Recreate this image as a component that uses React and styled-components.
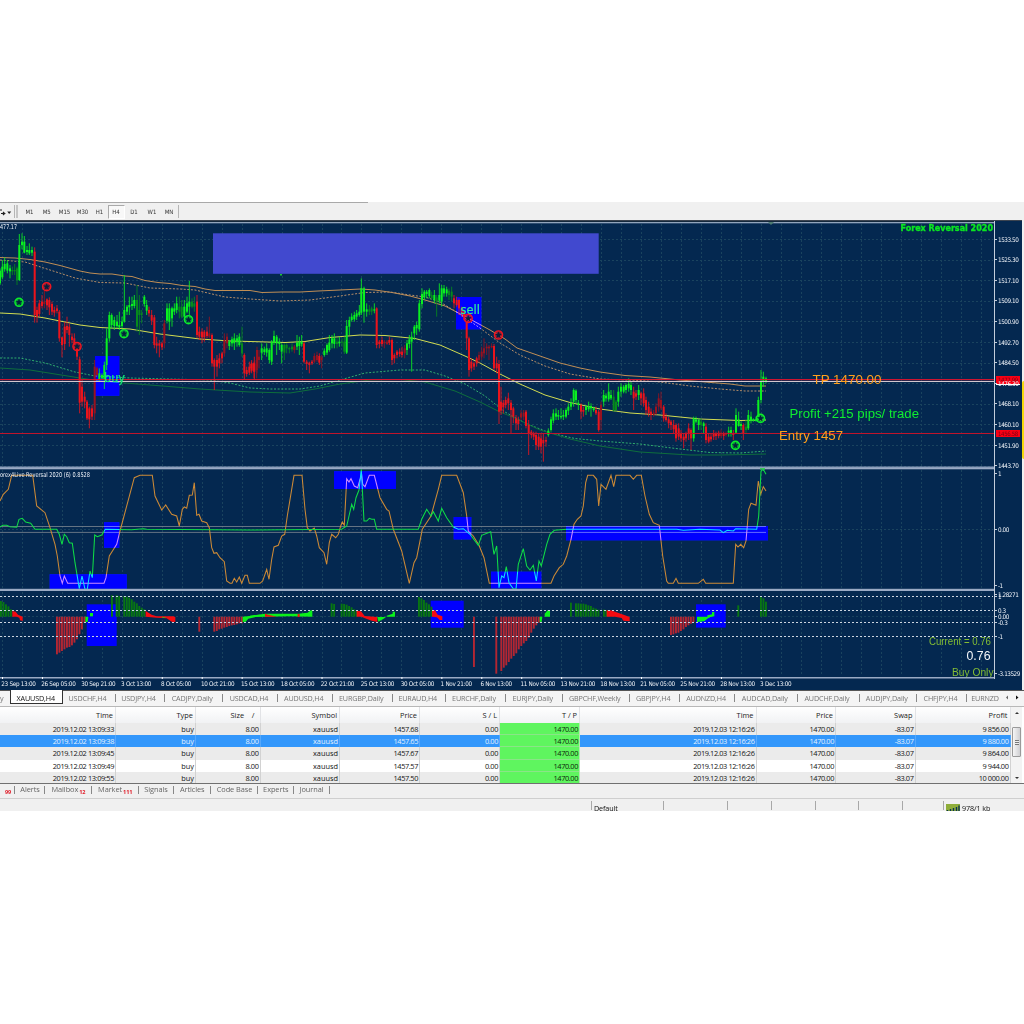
import React from "react";
import styled, { createGlobalStyle, css } from "styled-components";

const GlobalStyle = createGlobalStyle`
  html, body { margin: 0; background: #fff; }
  body { width: 1024px; height: 1024px; overflow: hidden; }
`;

const ui = css`font-family: "Open Sans", "Noto Sans", sans-serif;`;
const scaleFont = css`font-family: "DejaVu Sans Condensed", "DejaVu Sans", sans-serif; font-stretch: condensed;`;

const Screen = styled.div`
  ${ui}
  width: 1024px;
  height: 1024px;
  padding-top: 202px;
  box-sizing: border-box;
  background: #fff;
`;

const Terminal = styled.div`
  display: flex;
  flex-direction: column;
  width: 1024px;
  height: 609px;
  background: #f0f0f0;
  position: relative;
  overflow: hidden;
`;

/* ---------- toolbar ---------- */
const Toolbar = styled.div`
  display: flex;
  align-items: center;
  height: 18px;
  flex: none;
  background: linear-gradient(90deg, #a9a9a9, #a9a9a9) 0 0 / 368px 1px no-repeat, #f0f0f0;
`;
const Tool = styled.svg`
  display: block;
  width: 14px;
  height: 18px;
`;
const Grip = styled.div`
  width: ${(p) => p.$w || 1}px;
  height: 13px;
  margin: 1px 1px 0 0;
  background: ${(p) => p.$c || "#b5b5b5"};
`;
const Period = styled.div`
  box-sizing: border-box;
  width: ${(p) => p.$w}px;
  height: 14px;
  margin-top: 2px;
  text-align: center;
  font-size: 6px;
  line-height: 13.5px;
  ${scaleFont}
  color: #333;
  ${(p) => p.$on && css`
    background: #f8f8f8;
    border: 1px solid #aaa;
    border-right-color: #fff;
    border-bottom-color: #fff;
    line-height: 12px;
  `}
`;

/* ---------- chart window ---------- */
const ChartWindow = styled.div`
  display: flex;
  flex-direction: column;
  flex: none;
  width: 1022px;
  height: 470px;
  box-sizing: border-box;
  border-top: 1px solid #3c4450;
  background: #042850;
`;
const Panel = styled.div`
  display: flex;
  flex: none;
  height: ${(p) => p.$h}px;
`;
const Plot = styled.svg`
  display: block;
  flex: none;
  width: 994px;
  height: ${(p) => p.$h}px;
`;
const PriceScale = styled.div`
  flex: 1;
  box-sizing: border-box;
  height: ${(p) => p.$h}px;
  border-left: 1px solid #c3cddb;
`;
const Mark = styled.div`
  display: flex;
  align-items: center;
  height: 0;
  margin-top: ${(p) => p.$gap}px;
  font-size: 6.3px;
  letter-spacing: -0.44px;
  white-space: nowrap;
  color: #f2f5fa;
  ${scaleFont}
  &::before {
    content: "";
    width: 2px;
    height: 1px;
    margin-right: 1px;
    background: #c3cddb;
  }
`;
const PriceTag = styled.div`
  box-sizing: border-box;
  display: flex;
  align-items: center;
  height: ${(p) => (p.$line ? 9 : 7)}px;
  margin: ${(p) => p.$gap}px 2px ${(p) => -p.$gap - (p.$line ? 9 : 7)}px 1px;
  padding-left: 2px;
  font-size: 6px;
  letter-spacing: -0.36px;
  color: #7a0014;
  background: #fa0014;
  border-bottom: ${(p) => (p.$line ? "1px solid #fff" : "0")};
  ${scaleFont}
`;
const TimeScale = styled.div`
  display: flex;
  flex: none;
  height: 11px;
  padding-left: 1.3px;
  margin-top: -1px;
`;
const TimeMark = styled.div`
  flex: none;
  width: 39.94px;
  font-size: 6.3px;
  line-height: 11px;
  letter-spacing: -0.3px;
  white-space: nowrap;
  color: #f2f5fa;
  ${scaleFont}
`;

/* ---------- chart tabs ---------- */
const Tabs = styled.div`
  display: flex;
  flex: none;
  height: 17px;
  box-sizing: border-box;
  border-top: 1px solid #555;
  border-bottom: 1px solid #b8b8b8;
  background: #f4f4f4;
`;
const Tab = styled.div`
  box-sizing: border-box;
  flex: none;
  width: ${(p) => p.$w}px;
  height: 14px;
  padding-right: 3px;
  font-size: 7.2px;
  letter-spacing: -0.14px;
  line-height: 14px;
  text-align: center;
  white-space: nowrap;
  color: #757575;
  background: linear-gradient(#888, #888) right 3px / 1px 8px no-repeat;
  ${(p) => p.$plain && css`background: none;`}
  ${(p) => p.$on && css`
    margin-top: -1px;
    padding-right: 1px;
    border: 1px solid #333;
    border-top: 0;
    color: #111;
    background: #fff;
    line-height: 16px;
  `}
`;

/* ---------- trade table ---------- */
const Row = styled.div`
  display: grid;
  grid-template-columns: 116px 80px 64.5px 79.5px 80px 80px 80px 176.5px 79.5px 79.5px 95px;
  width: 1010.5px;
  flex: none;
  height: ${(p) => p.$h}px;
  background: ${(p) => p.$bg};
  color: ${(p) => p.$fg};
`;
const Cell = styled.div`
  box-sizing: border-box;
  padding-right: ${(p) => p.$pad}px;
  border-right: 1px solid ${(p) => p.$rule};
  text-align: right;
  font-size: 7.4px;
  letter-spacing: ${(p) => (p.$tight ? -0.4 : 0)}px;
  line-height: ${(p) => p.$lh}px;
  white-space: nowrap;
  background: ${(p) => p.$fill || "none"};
  color: ${(p) => (p.$fill ? "#0c260b" : "inherit")};
  ${(p) => p.$fill && css`box-shadow: inset 0 -1px #8be488;`}
`;
const TableArea = styled.div`
  display: flex;
  flex: none;
  height: 77px;
  box-sizing: border-box;
  background: #fff;
  border-bottom: 1px solid #707070;
`;
const Rows = styled.div`
  width: 1011px;
  height: 76px;
  overflow: hidden;
`;
const ScrollBar = styled.div`
  display: flex;
  flex-direction: column;
  align-items: center;
  width: 11px;
  height: 76px;
  background: #f3f3f3;
`;
const Arrow = styled.div`
  width: 0;
  height: 0;
  border: 2px solid transparent;
  ${(p) => (p.$down ? "border-top-color: #333; margin-top: 20px;" : "border-bottom-color: #333; margin-top: 3px; ")}
`;
const Thumb = styled.div`
  display: flex;
  align-items: center;
  justify-content: center;
  box-sizing: border-box;
  width: 9px;
  height: 30px;
  margin-top: 13px;
  border: 1px solid #9a9a9a;
  border-radius: 1px;
  background: linear-gradient(90deg, #f6f6f6, #cfcfd2);
  &::after {
    content: "";
    width: 4px;
    height: 5px;
    background: repeating-linear-gradient(#777 0 1px, #eee 1px 2px);
  }
`;

/* ---------- bottom tabs and status bar ---------- */
const BottomTabs = styled.div`
  display: flex;
  flex: none;
  box-sizing: border-box;
  height: 15px;
  border-bottom: 1px solid #cfcfcf;
`;
const BottomTab = styled.div`
  flex: none;
  width: ${(p) => p.$w}px;
  height: 14px;
  text-align: center;
  font-size: 7.4px;
  line-height: 11px;
  letter-spacing: -0.08px;
  white-space: nowrap;
  color: #666;
  background: linear-gradient(#888, #888) right 2px / 1px 8px no-repeat;
`;
const Count = styled.span`
  font-weight: 700;
  font-size: 5.6px;
  color: #e0202c;
  position: relative;
  top: 2px;
  margin-left: 1px;
`;
const StatusBar = styled.div`
  display: flex;
  flex: 1;
  padding-left: 591px;
  background: #f0f0f0;
`;
const Status = styled.div`
  box-sizing: border-box;
  display: flex;
  align-items: center;
  gap: 2px;
  width: ${(p) => p.$w}px;
  height: 10px;
  margin-top: 2px;
  padding: 3px 0 0 3px;
  background: linear-gradient(#a8a8a8, #a8a8a8) 0 0 / 1px 9px no-repeat;
  font-size: 7.2px;
  letter-spacing: -0.1px;
  line-height: 8px;
  color: #111;
  white-space: nowrap;
`;
const SideStrip = styled.div`
  position: absolute;
  right: 0;
  top: 179px;
  width: 2.5px;
  height: 78px;
  border-radius: 2px 0 0 2px;
  background: #f4d90c;
`;

/* ---------- price data: x, high, low, body top, body bottom, kind (thirds of a pixel) ---------- */
const BARS_A = `0 205 255 212 250 g|7 180 238 200 232 g|14 172 215 192 208 g|22 180 220 190 212 g|30 195 235 205 214 g|37 200 225 210 214 d|44 192 225 210 214 d|51 200 255 205 240 d|58 102 243 135 240 g|66 100 148 125 135 g|73 108 160 125 158 g|81 138 165 150 156 g|88 130 165 150 160 g|96 140 168 150 158 g|104 142 368 155 345 r|111 320 368 330 350 r|118 300 350 310 342 r|126 285 325 305 318 r|133 270 325 305 312 m|141 295 330 298 316 r|148 292 345 300 322 r|156 305 345 312 335 r|163 320 350 330 338 r|171 315 340 325 333 r|178 330 425 335 415 r|186 410 472 412 435 r|194 365 450 380 432 r|201 350 400 378 390 r|208 370 440 380 405 r|216 400 430 410 420 r|223 400 445 415 430 r|231 430 480 435 470 r|239 470 640 478 608 r|246 540 620 560 605 r|254 575 625 590 605 r|261 600 660 605 655 r|268 620 685 625 658 r|276 615 660 625 650 r|284 480 660 500 640 m|291 500 530 505 525 m|298 505 545 520 538 g|306 520 540 525 535 g|313 485 567 495 540 g|320 385 510 415 495 g|328 335 425 345 415 g|335 340 385 345 375 g|343 350 390 360 378 g|351 345 385 365 378 g|358 335 390 375 382 g|366 350 385 365 378 g|373 225 368 330 365 g|381 315 345 320 335 g|388 290 345 315 322 g|396 290 330 312 318 g|403 285 325 300 318 g|411 255 395 300 380 d|418 285 405 330 345 d|425 330 370 340 345 d|433 285 320 290 312 g|440 300 345 315 332 g|447 320 350 330 340 r|455 330 375 345 362 r|463 345 445 352 435 r|470 410 460 430 437 r|478 420 472 430 437 r|486 425 450 430 442 r|493 360 445 370 430 m|501 310 370 325 362 g|508 310 390 325 365 g|516 320 380 325 355 g|523 310 345 325 335 g|530 290 340 310 330 g|538 290 355 320 335 d|545 300 355 320 350 d|553 300 360 320 350 g|561 290 340 310 335 g|568 243 345 305 320 g|576 295 325 305 320 d|583 290 335 310 320 d|591 285 415 305 405 r|598 380 420 395 410 r|606 385 430 395 412 r|613 390 425 395 412 r|621 380 415 395 408 r|628 350 415 400 410 m|636 400 500 405 490 r|643 475 570 480 500 r|651 465 530 480 500 r|658 460 505 475 490 r|666 455 490 460 475 r|673 400 470 420 460 m|681 400 445 410 430 m|688 420 450 425 438 g|696 410 440 418 430 g|703 400 450 415 430 g|711 405 440 415 425 g|718 400 440 410 435 g|726 380 470 430 460 d|733 460 540 465 520 r|740 500 530 510 522 r|748 485 525 500 518 r|755 480 520 490 512 r|763 470 540 490 515 r|771 440 520 450 500 m`;
const BARS_B = `4 425 455 432 445 r|12 425 475 430 455 r|20 400 475 420 450 m|27 390 445 410 420 m|35 370 420 385 398 g|43 380 405 388 396 g|50 370 410 385 398 g|58 385 430 390 420 g|65 360 435 365 425 g|72 332 375 348 368 g|80 345 405 350 370 g|88 355 390 365 372 g|95 370 430 375 395 g|103 370 420 375 398 d|110 370 400 375 385 d|118 380 400 384 388 d|126 370 395 380 388 d|133 375 400 380 390 m|141 345 390 368 380 g|148 350 405 365 378 g|155 345 380 365 372 g|162 365 430 370 425 r|170 420 450 425 432 r|178 425 460 428 435 r|186 420 435 425 430 r|193 400 430 408 425 m|201 395 425 405 420 m|208 400 435 408 428 r|215 405 445 412 420 m|223 385 410 392 405 g|231 370 405 375 398 g|238 345 395 368 390 g|246 345 385 355 370 g|253 340 385 355 372 g|261 355 385 365 372 d|268 350 380 365 370 g|276 355 380 365 368 d|283 350 402 365 395 d|290 300 402 318 398 g|298 290 345 300 320 g|305 280 305 290 300 g|313 275 305 285 298 g|320 270 300 280 290 g|328 255 290 275 285 g|334 175 285 205 278 g|342 200 308 205 275 g|350 250 290 268 275 g|358 255 285 268 275 d|365 260 285 265 275 d|373 250 280 268 272 g|380 262 385 265 375 r|388 360 385 365 372 r|396 350 380 360 372 r|403 360 385 365 370 m|411 360 375 365 372 m|418 350 375 360 368 r|426 355 435 360 420 r|433 400 430 405 415 r|441 390 415 395 405 r|449 385 410 395 402 r|456 380 412 395 405 r|464 375 415 385 400 m|471 360 405 370 390 g|478 345 385 358 372 g|485 335 455 350 365 g|493 315 360 320 340 g|500 305 345 315 325 g|508 240 335 250 328 g|516 205 265 222 252 g|523 210 240 215 232 g|530 210 235 215 222 g|538 205 235 210 228 g|545 215 240 225 235 d|553 210 250 225 240 g|560 225 290 232 245 d|568 190 250 225 242 g|575 195 260 205 245 g|582 195 230 205 220 g|590 200 230 208 220 g|597 205 240 212 225 d|605 200 245 215 230 d|612 225 265 235 250 r|620 230 260 240 255 r|627 235 285 240 265 r|635 260 290 265 280 r|642 270 300 275 290 r|650 290 390 300 355 r|657 350 470 355 450 r|664 415 455 425 445 r|672 425 450 430 440 r|680 410 440 415 430 r|687 395 430 405 420 m|695 380 420 395 410 m|702 355 415 385 400 m|710 370 405 380 385 m|717 375 420 380 385 m|725 370 385 378 382 m|732 372 450 378 445 r|740 410 460 430 445 r|747 420 612 432 575 r`;
const BARS_C = `3 500 585 545 572 r|10 540 580 548 562 r|17 530 565 540 555 r|25 518 570 535 550 r|33 540 640 548 570 r|40 560 610 565 590 r|48 585 630 595 610 r|55 590 630 600 612 r|63 570 600 580 592 m|71 570 600 578 590 m|78 570 625 575 618 r|86 600 705 615 640 r|94 630 655 635 645 r|101 635 660 640 650 r|108 635 690 645 675 r|116 640 690 650 680 r|123 640 700 655 680 r|130 640 725 660 670 r|138 650 680 660 665 r|145 625 650 632 645 g|153 590 635 598 630 g|160 568 610 580 602 g|168 565 600 580 590 g|175 570 600 585 590 g|183 565 598 588 592 g|190 570 600 585 590 g|198 565 595 570 590 g|205 550 585 560 572 g|213 535 570 548 560 g|221 505 560 510 545 g|228 508 550 512 540 g|235 540 570 548 555 g|243 550 598 555 575 r|250 560 590 570 575 r|258 555 585 560 570 g|266 545 575 558 568 g|273 550 590 558 565 g|281 560 575 565 570 g|288 560 585 570 580 r|296 570 635 575 630 r|303 545 630 555 600 m|311 510 560 525 545 g|318 520 545 527 535 g|326 490 545 515 538 g|333 510 540 525 535 g|341 510 575 530 572 d|348 540 575 545 570 d|355 500 560 515 545 g|363 490 530 500 515 g|371 495 520 500 515 g|378 490 520 495 510 g|386 475 515 492 505 g|393 485 525 495 510 g|401 500 570 515 535 r|408 510 540 520 530 r|416 495 540 510 525 g|423 515 555 520 535 r|431 505 560 520 550 r|438 530 585 540 570 r|446 545 590 560 580 r|453 565 600 575 585 r|461 570 590 578 585 m|468 550 585 560 580 m|476 520 575 535 560 m|483 515 570 540 565 m|491 555 605 560 595 r|498 580 605 590 600 r|506 590 625 598 610 r|513 600 630 605 615 r|521 600 640 615 628 r|528 610 665 615 655 r|536 610 660 625 650 r|543 630 665 640 655 r|551 640 685 650 660 r|558 635 665 640 655 r|566 610 660 625 640 r|573 625 690 630 655 r|581 590 665 595 655 g|588 590 610 598 605 g|596 595 630 600 615 g|603 595 630 605 615 d|611 605 640 610 618 g|618 610 670 620 660 r|626 640 670 650 665 r|633 640 665 650 658 r|641 630 660 640 650 r|648 635 660 640 648 r|656 632 655 638 648 r|663 628 655 638 648 m|671 635 660 640 648 r|678 635 650 640 645 m|686 620 650 632 638 g|693 620 650 630 640 g|700 630 660 640 645 r|708 565 640 585 638 g|716 575 620 598 618 g|723 605 630 612 618 g|730 610 660 615 640 r|738 600 640 620 630 d|745 570 630 585 625 g|753 575 610 590 602 g|760 595 605 598 603 g|768 590 605 598 603 g|775 530 605 540 600 g|783 450 550 485 540 g|790 455 500 470 485 g|798 470 490 475 485 g`;

const KIND = { g: "#0af020", d: "#068a1c", r: "#ea141c", m: "#981220" };
const parseBars = (src, ox, oy) =>
  src.split("|").map((b) => {
    const [x, hi, lo, top, bot, kind] = b.split(" ");
    const Y = (v) => oy + v / 3;
    return { x: ox + x / 3, hi: Y(+hi), lo: Y(+lo), top: Y(+top), bot: Y(+bot), kind };
  });
const CANDLES = [...parseBars(BARS_A, 0, 200), ...parseBars(BARS_B, 250, 220), ...parseBars(BARS_C, 500, 220)];

const BANDS = [
  { c: "#c08e55", pts: "0,257.5 15,258 30,259.500 45,262 60,265.500 80,271 90,273 100,274 112,274 125,276 132,276.500 145,280.500 158,282.500 170,283.500 182,285.500 195,286.500 205,289 215,290.500 250,290.500 262,292.500 282,292 300,292 318,291 340,290 361,289 375,290 392,292.500 410,296 425,300 445,306 468,318 490,330 505,339 517,348 540,356 560,363 580,368 600,372 625,375.500 650,377 680,380 705,382 730,384 745,386 766,386" },
  { c: "#b58d68", dash: "2 1.6", pts: "0,260 25,262 50,270 75,278 100,282.500 125,283 150,288 180,289 195,290 225,297 250,299 280,301 310,300 340,296 365,292.500 390,292 410,295 425,297 440,302 455,311 480,328 500,343 520,355 545,366 570,374 600,379 640,380.500 660,382 690,386 720,389 745,391 766,391" },
  { c: "#d2dc50", pts: "0,313 20,314 45,318 60,321 80,325 100,327.500 130,329 160,334 200,339 230,341 250,341.500 285,342.500 305,341.500 330,337.500 360,335 385,335.500 415,338.500 440,345 465,356 480,363 500,374 520,384 545,395 570,402.500 600,409 630,413 660,415 700,419 740,420.500 766,420" },
  { c: "#2fae6e", dash: "2 1.6", pts: "0,358 20,358 45,363 75,372 95,376 130,378 170,379 210,380 230,383 250,388 270,389 300,389 320,386 340,380 365,373 400,370 425,370 445,376 465,384 485,396 505,412 525,423 550,433 575,438.500 600,441 640,444 680,449 710,452.500 740,453 766,451" },
  { c: "#0e6e3c", pts: "0,368 30,370 55,374 80,378 100,381 150,385 200,389 250,392 290,393 315,389 340,384 370,380 400,379.500 425,382 455,391 480,402 500,412 515,418 540,430 570,439 600,446 640,452 690,455 720,455 745,454.500 766,454" },
];

/* oscillator strokes, each run holds its own horizontal origin */
const joinRuns = (runs) =>
  runs.map(([ox, s]) => s.split(";").map((p) => { const [x, y] = p.split(","); return `${(ox + x / 3).toFixed(1)},${(466 + y / 3).toFixed(1)}`; }).join(" ")).join(" ");
const SLOW = joinRuns([
  [0, "0,105;10,85;25,70;35,28;98,28;110,120;135,140;150,185;165,235;172,270;180,330;187,352;193,330;203,352;312,352;318,335;328,270;350,235;360,195;403,35;420,28;457,28;465,90;485,132;497,117;515,145;530,150;538,180;547,130;553,123;560,127;568,88;577,87;583,50;590,148;597,145;605,165;620,170;628,185;635,245;642,262;650,260;660,275;673,287;680,345;690,352;696,352;703,337;710,348;718,333;725,352;735,328;742,328;748,352"],
  [250, "30,352;38,345;50,310;57,340;65,280;72,243;85,238;95,210;104,205;112,150;132,28;156,28;165,130;172,185;180,195;193,186;200,210;208,245;222,260;230,295;238,230;245,205;257,215;265,205;272,180;277,168;283,178;290,38;297,48;303,38;313,60;323,65;330,40;335,28;338,55;345,62;358,28;373,28;390,95;410,130;417,135;430,190;455,255;478,352;492,290;500,275;517,190;543,150;565,70;575,28;620,28;640,80;650,150;655,195;670,210;687,238;702,275;718,352"],
  [500, "0,352;153,352;162,330;178,305;190,295;200,270;213,220;222,175;232,160;243,150;250,120;257,50;263,28;280,28;290,40;296,120;303,55;318,70;333,28;341,62;348,28;390,28;400,40;410,28;424,28;435,90;448,145;460,170;478,178;488,270;500,345;505,352;520,352;528,337;535,352;595,352;610,340;617,352;700,352;707,235;714,243;722,235;731,245;738,225;746,130;753,112;768,118;775,45;782,85;790,62;798,75"],
]);
const FAST = joinRuns([
  [0, "0,183;8,178;20,178;30,182;50,184;57,160;67,157;77,168;92,172;105,190;170,190;178,205;186,235;193,205;200,212;208,230;217,232;225,290;238,368;246,330;255,370;262,370;270,315;277,335;284,207;292,212;305,207;316,190;395,191;430,188;440,190"],
  [250, "0,192;275,190;290,180;297,150;305,115;311,130;318,95;327,72;334,10;342,165;350,165;358,157;365,160;373,160;380,190;505,190;515,160;530,130;543,150;550,137;565,165;575,127;590,155;610,183;625,190;640,188;660,205;685,238;695,208;722,197;732,265;740,240;747,365;755,330;762,335;769,302"],
  [500, "27,350;40,368;48,370;55,295;70,248;80,300;90,312;100,298;109,345;117,285;124,300;140,235;150,205;163,193;200,190;530,190;550,193;600,190;660,192;670,200;682,193;700,195;707,188;770,190;776,150;783,15;790,10;798,25"],
]);

/* momentum histogram: kind, origin, start x, then the far end of each bar */
const HISTO = [
  ["d", 0, 3, [405, 408, 415, 421, 430]], ["d", 0, 336, [388]], ["d", 0, 350, [388, 390]], ["d", 0, 373, [390, 392, 395, 400, 407, 412, 420, 425, 430]],
  ["m", 0, 171, [565, 560, 555, 550, 545, 543, 538, 530, 520, 505, 490, 470]], ["m", 0, 598, [497]],
  ["m", 0, 643, [497, 495, 490, 488, 485, 483, 480, 478, 477, 475, 472, 472]],
  ["d", 250, 245, [412, 414]], ["d", 250, 275, [413, 414, 416, 420, 424, 430, 434]], ["d", 250, 507, [393, 397, 402, 410, 415, 422]],
  ["m", 250, 672, [603]], ["m", 250, 739, [623]], ["m", 500, 4, [615, 605, 598, 588, 578, 570, 562, 550, 540, 532, 525, 515, 500, 488, 478, 470]],
  ["d", 500, 213, [410]], ["d", 500, 228, [412, 412, 413, 413, 415, 418, 420, 425, 428, 431]], ["d", 500, 312, [431, 433]],
  ["m", 500, 513, [507, 505, 502, 500, 495, 490, 483, 478, 473, 468]],
  ["d", 500, 715, [418]], ["d", 500, 783, [392, 397, 407]],
];
const FLAGS = [
  ["r", 0, "37,435 47,437 54,446 68,452 68,465 60,463 58,455 50,452 37,452"],
  ["r", 0, "437,435 455,446 470,451 520,451 526,453 526,468 515,467 500,457 470,455 437,452"],
  ["g", 0, "256,452 265,452 263,468 256,468"], ["g", 0, "270,441 279,441 279,451 270,451"], ["g", 0, "487,452 500,455 487,455"],
  ["g", 0, "728,452 780,446 780,450 745,458 737,467 728,468"],
  ["g", 250, "0,449 45,443 145,443 173,440 180,434 187,432 187,452 120,451 0,453"], ["r", 250, "45,443 55,446 80,452 60,452 45,452"], ["r", 250, "143,444 149,444 149,453 143,453"],
  ["r", 250, "320,434 333,436 344,450 382,453 382,468 365,464 345,457 334,452 320,452"],
  ["g", 250, "382,453 408,453 400,459 385,467"], ["g", 250, "410,449 428,443 428,437 435,437 435,452 410,452"],
  ["r", 250, "546,431 555,433 563,446 577,451 577,462 569,462 561,454 546,452"],
  ["g", 500, "119,452 127,452 125,467 119,468"], ["g", 500, "134,447 134,443 143,433 150,433 150,452 134,452"],
  ["r", 500, "320,433 332,433 375,448 389,453 389,466 370,464 365,456 345,452 320,452"],
  ["g", 500, "591,452 632,452 622,458 613,466 591,468"], ["g", 500, "622,448 636,445 636,438 643,438 643,451 622,455"],
];

const ZONES = {
  price: [[95, 356, 24.3, 39.7], [456, 297, 25.3, 32.3]],
  osc: [[49.7, 574.3, 77, 14.4], [104, 522.3, 15.3, 25.4], [334, 471.3, 62, 17.7], [453.7, 517, 17.6, 22.4], [491, 571.7, 50.3, 16.6], [566, 526, 202, 14.3]],
  mom: [[86.7, 604.3, 30, 41.7], [430.7, 600.7, 33, 27], [696, 604.3, 29.7, 23.3]],
};
const BadgeRing = ({ x, y, c }) => (
  <g transform={`translate(${x} ${y})`}>
    <circle r="4.1" fill={c} fillOpacity=".55" stroke={c} strokeWidth="1.4" />
    <path d="M0-3.5 1-1.2 3.4-1.1 1.500.5 2.200 3 0 1.700-2.200 3-1.500.5-3.400-1.100-1-1.200Z" fill="#04203c" />
  </g>
);
const Zones = ({ list, over }) =>
  list.map(([x, y, w, h], i) => <rect key={i} x={x} y={y} width={w} height={h} fill="#00f" style={over ? { mixBlendMode: "screen" } : undefined} />);
const Grid = ({ top, bottom, rows }) => (
  <g stroke="#2c5a6b" strokeWidth="1" strokeDasharray="2 2" opacity=".55">
    {Array.from({ length: 50 }, (_, i) => { const x = Math.round(2 + i * 19.97) + 0.5; return <line key={i} x1={x} x2={x} y1={top} y2={bottom} />; })}
    {rows.map((y) => <line key={y} x1="0" x2="993" y1={y} y2={y} />)}
  </g>
);
const Label = ({ x, y, w, size, c, weight, bold, family = "Liberation Sans", children }) => (
  <text x={x} y={y} textLength={w} lengthAdjust="spacingAndGlyphs" fontFamily={`"${family}", sans-serif`} fontSize={size} fontWeight={weight} fill={c} stroke={bold ? c : "none"} strokeWidth={bold || 0}>{children}</text>
);

const PricePlot = () => (
  <Plot $h={247} viewBox="0 221 994 247">
    <rect y="221" width="994" height="1" fill="#14283c" />
    <rect y="222" width="994" height="1.3" fill="#93a5bd" />
    <Grid top={224} bottom={466} rows={Array.from({ length: 12 }, (_, i) => Math.round(239 + i * 20.6) + 0.5)} />
    <Zones list={ZONES.price} />
    {BANDS.map((b, i) => <polyline key={i} points={b.pts} fill="none" stroke={b.c} strokeWidth="1" strokeDasharray={b.dash} />)}
    <Zones list={ZONES.price} over />
    {CANDLES.map((c, i) => (
      <g key={i} fill={KIND[c.kind]}>
        <rect x={c.x - 0.5} y={c.hi} width="1" height={c.lo - c.hi} opacity=".85" />
        <rect x={c.x - 1} y={c.top} width="2" height={Math.max(1, c.bot - c.top)} />
      </g>
    ))}
    <rect y="379" width="994" height="1.2" fill="#cf1430" />
    <rect y="381" width="994" height="1" fill="#d3c7cf" />
    <rect y="433" width="994" height="1" fill="#c0142b" />
    <rect x="213" y="233.3" width="385.7" height="40.5" fill="#4149cf" />
    <rect x="280" y="274" width="2" height="1.5" fill="#19c832" />
    <path d="M768 222h6l-3 3z" fill="#4d7a70" />
    {[[19, 302.3], [124, 333.7], [188.5, 319.7], [735.4, 445.4], [760.5, 418.4]].map(([x, y]) => <BadgeRing key={x} x={x} y={y} c="#0cec2a" />)}
    {[[46.7, 286.7], [77, 346.5], [468.2, 318.4], [498.5, 335]].map(([x, y]) => <BadgeRing key={x} x={x} y={y} c="#f01620" />)}
    <Label x="104" y="381.5" w="21" size="12.5" c="#10e878" bold=".25" family="DejaVu Sans">buy</Label>
    <Label x="460.5" y="314.3" w="19.5" size="11.5" c="#2cf09a" bold=".2" family="DejaVu Sans">sell</Label>
    <Label x="0" y="229" w="17" size="6.4" c="#eef2f8" family="DejaVu Sans">477.17</Label>
    <Label x="900.5" y="231" w="92.5" size="8.4" weight="700" bold=".35" c="#0be622" family="DejaVu Sans">Forex Reversal 2020</Label>
    <Label x="812.5" y="384.3" w="69" size="12.6" c="#ffa01c">TP 1470.00</Label>
    <Label x="789.5" y="418" w="129.500" size="12.3" c="#0fee30">Profit +215 pips/ trade</Label>
    <Label x="779" y="440" w="64" size="12.6" c="#ffa01c">Entry 1457</Label>
    <rect y="466.5" width="994" height="1.5" fill="#8b9dbb" />
  </Plot>
);

const OscillatorPlot = () => (
  <Plot $h={122} viewBox="0 468 994 122">
    <rect y="468" width="994" height="1.3" fill="#9aaac4" />
    <rect x="760" y="468" width="5" height="1.5" fill="#3fc45c" />
    <Grid top={470} bottom={588} rows={[529.5]} />
    <Zones list={ZONES.osc} />
    <line x1="0" x2="766" y1="526.5" y2="526.5" stroke="#7d8791" strokeWidth=".8" />
    <line x1="0" x2="766" y1="532.4" y2="532.4" stroke="#7d8791" strokeWidth=".8" />
    <polyline points={SLOW} fill="none" stroke="#cd8a36" strokeWidth="1.05" />
    <polyline points={FAST} fill="none" stroke="#0fdc46" strokeWidth="1.05" />
    <Zones list={ZONES.osc} over />
    <Label x="0" y="477.2" w="90" size="6.6" c="#eef2f8" family="DejaVu Sans">orex4Live Reversal 2020 (6) 0.8528</Label>
    <rect y="588.8" width="994" height="1.2" fill="#9aaac4" />
  </Plot>
);

const MomentumPlot = () => (
  <Plot $h={89} viewBox="0 590 994 89">
    <rect y="590" width="994" height="1" fill="#9aaac4" />
    <Grid top={592} bottom={676} rows={[616.5]} />
    <Zones list={ZONES.mom} />
    {HISTO.map(([k, ox, x0, ends], j) =>
      ends.map((e, i) => {
        const up = e < 452;
        const y = 466 + e / 3;
        return <rect key={`${j}-${i}`} x={ox + (x0 + i * 7.5) / 3 - 1} y={up ? y : 616.7} width="1.9" height={Math.abs(616.7 - y)} fill={k === "d" ? "#087612" : "#b32632"} />;
      })
    )}
    {FLAGS.map(([k, ox, pts], i) => (
      <polygon key={i} transform={`translate(${ox} 466) scale(.33333)`} points={pts} fill={k === "g" ? "#0bf01a" : "#f50b10"} />
    ))}
    {[596.5, 610.5, 622.5, 636.5].map((y) => <line key={y} x1="0" x2="993" y1={y} y2={y} stroke="#cbd4df" strokeWidth="1" strokeDasharray="2 2" />)}
    <Label x="929" y="645" w="62" size="10.5" c="#84bd34">Current = 0.76</Label>
    <Label x="966.5" y="660" w="24" size="12.5" c="#f5f7fa">0.76</Label>
    <Label x="952" y="676" w="41.500" size="10.5" c="#84bd34">Buy Only</Label>
    <rect y="677" width="994" height="1.500" fill="#9aaac4" />
    {Array.from({ length: 20 }, (_, i) => <rect key={i} x={2 + i * 39.94} y="677" width="1" height="2" fill="#fff" />)}
  </Plot>
);

const DATES = ["23 Sep 13:00", "26 Sep 05:00", "30 Sep 21:00", "3 Oct 13:00", "8 Oct 05:00", "10 Oct 21:00", "15 Oct 13:00", "18 Oct 05:00", "22 Oct 21:00", "25 Oct 13:00", "30 Oct 05:00", "1 Nov 21:00", "6 Nov 13:00", "11 Nov 05:00", "13 Nov 21:00", "18 Nov 13:00", "21 Nov 05:00", "25 Nov 21:00", "28 Nov 13:00", "3 Dec 13:00"];
const PRICES = ["1533.50", "1525.30", "1517.10", "1509.10", "1500.90", "1492.70", "1484.50", "1476.30", "1468.10", "1460.10", "1451.90", "1443.70"];
const TABS = [["USDCHF,H4", 53], ["USDJPY,H4", 49], ["CADJPY,Daily", 58.5], ["USDCAD,H4", 55], ["AUDUSD,H4", 54.5], ["EURGBP,Daily", 60.5], ["EURAUD,H4", 52.5], ["EURCHF,Daily", 60], ["EURJPY,Daily", 57.5], ["GBPCHF,Weekly", 66.5], ["GBPJPY,H4", 50.5], ["AUDNZD,H4", 55], ["AUDCAD,Daily", 62.5], ["AUDCHF,Daily", 62], ["AUDJPY,Daily", 57.5], ["CHFJPY,H4", 50]];
const COLUMNS = ["Time", "Type", "Size\u00a0\u00a0\u00a0\u00a0/", "Symbol", "Price", "S / L", "T / P", "Time", "Price", "Swap", "Profit"];
const TRADES = [
  ["33", "1457.68", "9 856.00", 12],
  ["38", "1457.65", "9 880.00", 12.6],
  ["45", "1457.67", "9 864.00", 12.4],
  ["49", "1457.57", "9 944.00", 12.4],
  ["55", "1457.50", "10 000.00", 12.4],
];
const PERIODS = [["M1", 17], ["M5", 17.5], ["M15", 18], ["M30", 18], ["H1", 16], ["H4", 17], ["D1", 19], ["W1", 17], ["MN", 17]];

export default function App() {
  return (
    <Screen>
      <GlobalStyle />
      <Terminal>
        <Toolbar>
          <Tool viewBox="0 0 14 18">
            <path d="M0 8h2M1 11.500h3.500l-1.500-1.500M3 13l1.500-1.500" stroke="#222" fill="none" strokeWidth="1.2" />
            <path d="M7.200 9.500h4l-2 2.400z" fill="#222" />
          </Tool>
          <Grip /><Grip $w={2} $c="#c6c6c6" />
          <Grip $c="transparent" />
          {PERIODS.map(([p, w]) => <Period key={p} $w={w} $on={p === "H4"}>{p}</Period>)}
          <Grip />
        </Toolbar>

        <ChartWindow>
          <Panel $h={247}>
            <PricePlot />
            <PriceScale $h={247}>
              <PriceTag $gap={154.5} $line>1477.99</PriceTag>
              <PriceTag $gap={208.5}>1456.58</PriceTag>
              {PRICES.map((p, i) => <Mark key={p} $gap={i ? 20.6 : 18.2}>{p}</Mark>)}
            </PriceScale>
          </Panel>
          <Panel $h={122}>
            <OscillatorPlot />
            <PriceScale $h={122}>
              <Mark $gap={5.5}>1</Mark>
              <Mark $gap={56}>0.00</Mark>
              <Mark $gap={55.5}>-1</Mark>
            </PriceScale>
          </Panel>
          <Panel $h={89}>
            <MomentumPlot />
            <PriceScale $h={89}>
              <Mark $gap={4.5}>1.28271</Mark>
              <Mark $gap={2.2}>1</Mark>
              <Mark $gap={13.6}>0.3</Mark>
              <Mark $gap={6.3}>0.00</Mark>
              <Mark $gap={6}>-0.3</Mark>
              <Mark $gap={13.6}>-1</Mark>
              <Mark $gap={37.2}>-3.13529</Mark>
            </PriceScale>
          </Panel>
          <TimeScale>{DATES.map((d) => <TimeMark key={d}>{d}</TimeMark>)}</TimeScale>
        </ChartWindow>

        <Tabs>
          <Tab $w={10} $plain>y{"\u00a0\u00a0\u00a0"}</Tab>
          <Tab $w={52.5} $on>XAUUSD,H4</Tab>
          {TABS.map(([t, w]) => <Tab key={t} $w={w}>{t}</Tab>)}
          <Tab $w={39} $plain>EURNZD</Tab>
          <Tool viewBox="0 0 14 18">
            <path d="M1 4.500v4L-1 6.500z" transform="translate(1 0)" fill="#666" />
            <path d="M10 4.500v4l2.500-2z" fill="#111" />
          </Tool>
        </Tabs>

        <TableArea>
          <Rows>
            <Row $h={15.6} $bg="linear-gradient(#fff, #f1f2f4)" $fg="#222">
              {COLUMNS.map((c, i) => <Cell key={i} $pad={i === 2 ? 5 : 2} $rule="#e2e3e6" $lh={16}>{c}</Cell>)}
            </Row>
            {TRADES.map(([sec, price, profit, h], r) => {
              const on = r === 1;
              const cells = [`2019.12.02 13:09:${sec}`, "buy", "8.00", "xauusd", price, "0.00", "1470.00", "2019.12.03 12:16:26", "1470.00", "-83.07", profit];
              return (
                <Row key={sec} $h={h} $bg={on ? "#3397fb" : r % 2 ? "#fff" : "#ebebeb"} $fg={on ? "#e3f1ff" : "#141414"}>
                  {cells.map((v, i) => (
                    <Cell key={i} $pad={1} $tight={i !== 1 && i !== 3} $rule={i === 6 ? "#b5e8b0" : on ? "#55a8fb" : "#d2d2d2"} $lh={12.6} $fill={i === 6 ? "#5ff55f" : null}>{v}</Cell>
                  ))}
                </Row>
              );
            })}
          </Rows>
          <ScrollBar><Arrow /><Thumb /><Arrow $down /></ScrollBar>
        </TableArea>

        <BottomTabs>
          <BottomTab $w={15}><Count>99</Count></BottomTab>
          <BottomTab $w={30}>Alerts</BottomTab>
          <BottomTab $w={47}>Mailbox<Count>12</Count></BottomTab>
          <BottomTab $w={46.5}>Market<Count>111</Count></BottomTab>
          <BottomTab $w={35}>Signals</BottomTab>
          <BottomTab $w={37.5}>Articles</BottomTab>
          <BottomTab $w={47}>Code Base</BottomTab>
          <BottomTab $w={35.5}>Experts</BottomTab>
          <BottomTab $w={36}>Journal</BottomTab>
        </BottomTabs>

        <StatusBar>
          <Status $w={72}>Default</Status>
          <Status $w={64} /><Status $w={44} /><Status $w={44} /><Status $w={43} /><Status $w={43.5} />
          <Status $w={41.5} />
          <Status $w={78}>
            <svg width="14" height="8" viewBox="0 0 14 8">
              <rect width="14" height="8" fill="#8fae3a" />
              <path d="M1.500 8V6M4.500 8V5M7.500 8V4M10.500 8V3M13 8V1.500" stroke="#0b3550" strokeWidth="1.400" />
            </svg>
            978/1 kb
          </Status>
        </StatusBar>
        <SideStrip />
      </Terminal>
    </Screen>
  );
}
